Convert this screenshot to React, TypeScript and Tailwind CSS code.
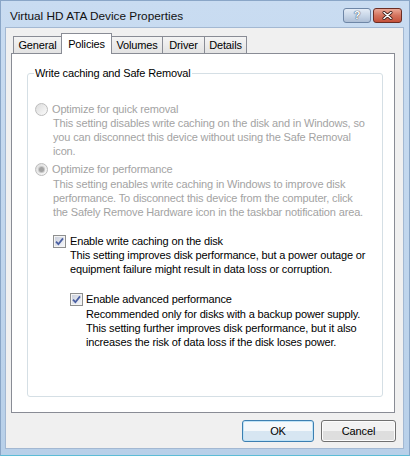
import React from 'react'

const FONT = { fontFamily: '"Liberation Sans", Arial, sans-serif' }

/** Win7 风格复选框（勾选状态） */
function CheckBox() {
  return (
    <span className="flex h-[13px] w-[13px] shrink-0 items-center justify-center border border-[#8e8f8f] bg-white">
      <span className="flex h-[11px] w-[11px] items-center justify-center border border-[#f4f4f4] bg-gradient-to-br from-[#cbd0dc] to-[#f4f6fa]">
        <svg width="9" height="9" viewBox="0 0 9 9">
          <path d="M1 4.6 L3.4 7.2 L8 1.4" fill="none" stroke="#4a5fa2" strokeWidth="1.8" />
        </svg>
      </span>
    </span>
  )
}

/** 禁用状态的单选框 */
function Radio({ checked }: { checked?: boolean }) {
  return (
    <span className="flex h-[13px] w-[13px] shrink-0 items-center justify-center rounded-full border border-[#bdbdbd] bg-gradient-to-br from-[#dcdcdc] to-[#fbfbfb]">
      {checked && <span className="h-[5px] w-[5px] rounded-full bg-[#a2a2a2] ring-1 ring-[#c8c8c8]" />}
    </span>
  )
}

function Lines({ lines, className }: { lines: string[]; className?: string }) {
  return (
    <div className={className}>
      {lines.map((l) => (
        <div key={l} className="h-[14px] whitespace-nowrap leading-[14px]">
          {l}
        </div>
      ))}
    </div>
  )
}

const tabs = [
  { name: 'General', w: 'w-[49px]' },
  { name: 'Policies', w: 'w-[51px]' },
  { name: 'Volumes', w: 'w-[52px]' },
  { name: 'Driver', w: 'w-[43px]' },
  { name: 'Details', w: 'w-[43px]' },
]

export default function App() {
  return (
    <div
      className="flex h-[456px] w-[410px] flex-col border border-[#8aa6c7] border-b-[#5cbcd6] bg-gradient-to-b from-[#c9dcf1] to-[#b8d0e9] text-[11px] tracking-[-0.15px] text-black"
      style={FONT}
    >
      {/* 标题栏 */}
      <div className="flex h-[26px] items-start">
        <div className="pl-[9px] pt-[8px] text-[11.8px] leading-[14px] tracking-normal text-[#111]">
          Virtual HD ATA Device Properties
        </div>
        <div className="ml-auto mr-[7px] mt-[7px] flex gap-[2px]">
          <div className="flex h-[15px] w-[28px] items-center justify-center rounded-[3px] border border-[#6e86a6] bg-gradient-to-b from-[#e4ecf6] via-[#c9d7e8] to-[#aebfd6] text-[11px] font-bold leading-none text-white [text-shadow:0_0_1px_#2b3f5c,0_0_1px_#2b3f5c]">
            ?
          </div>
          <div className="flex h-[15px] w-[29px] items-center justify-center rounded-[3px] border border-[#6b2d24] bg-gradient-to-b from-[#eaa897] via-[#d3735e] to-[#c4503a]">
            <svg width="11" height="9" viewBox="0 0 11 9">
              <path d="M2 1.5 L9 7.5 M9 1.5 L2 7.5" stroke="#3b1a14" strokeWidth="3" strokeLinecap="round" />
              <path d="M2 1.5 L9 7.5 M9 1.5 L2 7.5" stroke="#ffffff" strokeWidth="1.6" strokeLinecap="round" />
            </svg>
          </div>
        </div>
      </div>

      {/* 客户区 */}
      <div className="ml-[4px] mr-[5px] flex flex-col border border-[#a3b8d2] bg-[#f0f0f0]">
        <div className="flex h-[25px] items-end pl-[7px] pt-[5px]">
          {tabs.map((t, i) =>
            t.name === 'Policies' ? (
              <div
                key={t.name}
                className={`relative z-10 -mb-px -ml-px flex h-[21px] ${t.w} items-start justify-center border border-b-0 border-[#898c95] bg-white pt-[3px] leading-[14px]`}
              >
                {t.name}
              </div>
            ) : (
              <div
                key={t.name}
                className={`flex h-[17px] ${t.w} ${i > 0 ? '-ml-px' : ''} items-center justify-center border border-b-0 border-[#898c95] bg-gradient-to-b from-[#f4f4f4] to-[#e3e3e3] leading-[14px]`}
              >
                {t.name}
              </div>
            ),
          )}
        </div>

        <div className="ml-[5px] mr-[8px] h-[360px] border border-[#898c95] bg-white pb-[15px] pl-[15px] pr-[11px] pt-[12px]">
          <fieldset className="h-[331px] rounded-[3px] border border-[#d5dfe5] pl-[7px] pt-[22px]">
            <legend className="-ml-px px-[1px] leading-[14px]">Write caching and Safe Removal</legend>

            <div className="text-[#a3a3a3]">
              <div className="flex h-[14px] items-center gap-[4px]">
                <Radio />
                <span className="leading-[14px]">Optimize for quick removal</span>
              </div>
              <Lines
                className="pl-[18px]"
                lines={[
                  'This setting disables write caching on the disk and in Windows, so',
                  'you can disconnect this device without using the Safe Removal',
                  'icon.',
                ]}
              />

              <div className="mt-[4px] flex h-[14px] items-center gap-[4px]">
                <Radio checked />
                <span className="leading-[14px]">Optimize for performance</span>
              </div>
              <Lines
                className="pl-[18px] pt-[1px]"
                lines={[
                  'This setting enables write caching in Windows to improve disk',
                  'performance. To disconnect this device from the computer, click',
                  'the Safely Remove Hardware icon in the taskbar notification area.',
                ]}
              />
            </div>

            <div className="ml-[18px] mt-[15px]">
              <div className="flex h-[14px] items-center gap-[4px]">
                <CheckBox />
                <span className="leading-[14px]">Enable write caching on the disk</span>
              </div>
              <Lines
                className="pl-[17px]"
                lines={[
                  'This setting improves disk performance, but a power outage or',
                  'equipment failure might result in data loss or corruption.',
                ]}
              />

              <div className="ml-[17px] mt-[16px]">
                <div className="flex h-[14px] items-center gap-[3px]">
                  <CheckBox />
                  <span className="leading-[14px]">Enable advanced performance</span>
                </div>
                <Lines
                  className="pl-[16px] pt-[1px]"
                  lines={[
                    'Recommended only for disks with a backup power supply.',
                    'This setting further improves disk performance, but it also',
                    'increases the risk of data loss if the disk loses power.',
                  ]}
                />
              </div>
            </div>
          </fieldset>
        </div>

        {/* 按钮 */}
        <div className="mb-[6px] mr-[7px] mt-[7px] flex justify-end gap-[7px]">
          <button className="flex h-[22px] w-[72px] items-center justify-center rounded-[3px] border border-[#3c7fb1] bg-gradient-to-b from-[#f4f8fb] from-50% to-[#d7e6f2] to-50% leading-[14px] shadow-[inset_0_0_0_1px_#bfe3f7]">
            OK
          </button>
          <button className="flex h-[22px] w-[75px] items-center justify-center rounded-[3px] border border-[#707070] bg-gradient-to-b from-[#f2f2f2] from-50% to-[#dedede] to-50% leading-[14px] shadow-[inset_0_0_0_1px_#fcfcfc]">
            Cancel
          </button>
        </div>
      </div>
    </div>
  )
}
